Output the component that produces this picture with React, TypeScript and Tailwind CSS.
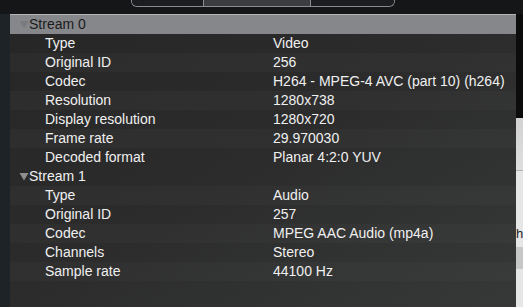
import { Fragment } from "react";

type Row = { key: string; value: string };

const streams: { name: string; open: boolean; selected: boolean; rows: Row[] }[] = [
  {
    name: "Stream 0",
    open: true,
    selected: true,
    rows: [
      { key: "Type", value: "Video" },
      { key: "Original ID", value: "256" },
      { key: "Codec", value: "H264 - MPEG-4 AVC (part 10) (h264)" },
      { key: "Resolution", value: "1280x738" },
      { key: "Display resolution", value: "1280x720" },
      { key: "Frame rate", value: "29.970030" },
      { key: "Decoded format", value: "Planar 4:2:0 YUV" },
    ],
  },
  {
    name: "Stream 1",
    open: true,
    selected: false,
    rows: [
      { key: "Type", value: "Audio" },
      { key: "Original ID", value: "257" },
      { key: "Codec", value: "MPEG AAC Audio (mp4a)" },
      { key: "Channels", value: "Stereo" },
      { key: "Sample rate", value: "44100 Hz" },
    ],
  },
];

const Disclosure = ({ faint }: { faint?: boolean }) => (
  <svg width="10" height="9" viewBox="0 0 10 9" className="shrink-0">
    <path d="M0.5 1 L9.5 1 L5 8.5 Z" fill={faint ? "#7a7b7f" : "#8e8e8e"} />
  </svg>
);

const App = () => {
  let idx = 0;
  return (
    <div
      className="w-[523px] h-[307px] overflow-hidden flex flex-col bg-[#151618] text-[14px] leading-[19px]"
      style={{ fontFamily: '"Liberation Sans", Arial, sans-serif' }}
    >
      {/* segmented control peeking in from the toolbar */}
      <div className="h-[14px] shrink-0 pl-[131px]">
        <div className="flex w-[264px] h-[7px] border border-t-0 border-[#8b8c90] rounded-b-[6px] overflow-hidden">
          <div className="w-[72px] bg-[#1c1d20] border-r border-[#8b8c90]" />
          <div className="w-[107px] bg-[#3c3d41] border-r border-[#8b8c90]" />
          <div className="flex-1 bg-[#1c1d20]" />
        </div>
      </div>

      <div className="flex flex-1 min-h-0">
        <div className="w-[10px] shrink-0 bg-[#1d2327]" />

        <div className="flex-1 flex flex-col border-t border-[#b4b5b8] bg-gradient-to-br from-[#262626] via-[#2c2c2c] to-[#363838] text-[#f0f0f0]">
          {streams.map((s) => (
            <Fragment key={s.name}>
              <div
                className={
                  "h-[19px] flex items-center gap-[0px] pl-[9px] " +
                  (s.selected ? "bg-[#86878b] text-[#1b1b1b]" : "")
                }
              >
                <Disclosure faint={s.selected} />
                <span>{s.name}</span>
              </div>
              {s.open &&
                s.rows.map((r) => {
                  idx++;
                  return (
                    <div
                      key={s.name + r.key}
                      className={
                        "h-[19px] flex items-center " +
                        (idx % 2 === 0 ? "bg-white/[0.025]" : "")
                      }
                    >
                      <span className="w-[263px] pl-[35px] shrink-0">{r.key}</span>
                      <span className="whitespace-nowrap">{r.value}</span>
                    </div>
                  );
                })}
            </Fragment>
          ))}
        </div>

        {/* sliver of the window behind */}
        <div className="w-[7px] shrink-0 flex flex-col bg-[#e6e6e6]">
          <div className="h-[104px] bg-[#0c0c0c]" />
          <div className="h-[53px] bg-gradient-to-b from-[#d2d2d2] to-[#dedede] border-b border-[#b0b0b0]" />
          <div className="h-[53px]" />
          <div className="h-[19px] text-[13px] leading-[19px] text-[#222] overflow-hidden">h</div>
          <div className="h-[4px]" />
          <div className="h-[22px] bg-[#c7c7c7]" />
          <div className="flex-1" />
        </div>
      </div>
    </div>
  );
};

export default App;
